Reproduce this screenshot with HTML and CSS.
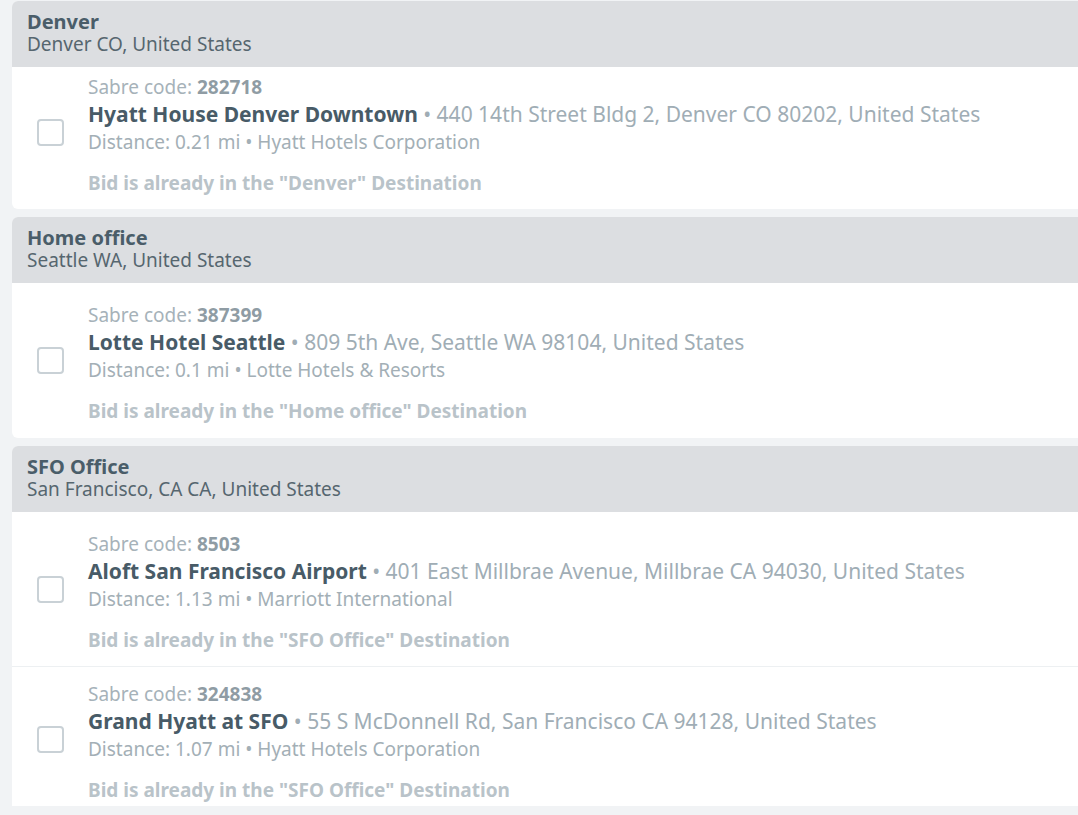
FILE: index.html
```html
<!DOCTYPE html>
<html>
<head>
<meta charset="utf-8">
<link rel="stylesheet" href="styles.css">
</head>
<body>
<div class="list">
  <section class="card">
    <header class="card-head">
      <div class="dest-name">Denver</div>
      <div class="dest-loc">Denver CO, United States</div>
    </header>
    <div class="row r1">
      <span class="checkbox"></span>
      <div class="info">
        <div class="code">Sabre code: <b>282718</b></div>
        <div class="hotel"><b>Hyatt House Denver Downtown</b> • 440 14th Street Bldg 2, Denver CO 80202, United States</div>
        <div class="meta">Distance: 0.21 mi • Hyatt Hotels Corporation</div>
        <div class="note">Bid is already in the "Denver" Destination</div>
      </div>
    </div>
  </section>
  <section class="card">
    <header class="card-head">
      <div class="dest-name">Home office</div>
      <div class="dest-loc">Seattle WA, United States</div>
    </header>
    <div class="row r2">
      <span class="checkbox"></span>
      <div class="info">
        <div class="code">Sabre code: <b>387399</b></div>
        <div class="hotel"><b>Lotte Hotel Seattle</b> • 809 5th Ave, Seattle WA 98104, United States</div>
        <div class="meta">Distance: 0.1 mi • Lotte Hotels &amp; Resorts</div>
        <div class="note">Bid is already in the "Home office" Destination</div>
      </div>
    </div>
  </section>
  <section class="card">
    <header class="card-head">
      <div class="dest-name">SFO Office</div>
      <div class="dest-loc">San Francisco, CA CA, United States</div>
    </header>
    <div class="row r3">
      <span class="checkbox"></span>
      <div class="info">
        <div class="code">Sabre code: <b>8503</b></div>
        <div class="hotel"><b>Aloft San Francisco Airport</b> • 401 East Millbrae Avenue, Millbrae CA 94030, United States</div>
        <div class="meta">Distance: 1.13 mi • Marriott International</div>
        <div class="note">Bid is already in the "SFO Office" Destination</div>
      </div>
    </div>
    <div class="row r4">
      <span class="checkbox"></span>
      <div class="info">
        <div class="code">Sabre code: <b>324838</b></div>
        <div class="hotel"><b>Grand Hyatt at SFO</b> • 55 S McDonnell Rd, San Francisco CA 94128, United States</div>
        <div class="meta">Distance: 1.07 mi • Hyatt Hotels Corporation</div>
        <div class="note">Bid is already in the "SFO Office" Destination</div>
      </div>
    </div>
  </section>
</div>
</body>
</html>
```
FILE: styles.css
```css
html, body {
  margin: 0;
  padding: 0;
  background: #f1f3f5;
  overflow: hidden;
  height: 815px;
}
body {
  font-family: "Noto Sans", "Open Sans", sans-serif;
  color: #4a5d69;
}
.list {
  height: 806px;
  overflow: hidden;
  padding: 1px 0 0 12px;
  box-sizing: border-box;
  display: flex;
  flex-direction: column;
  gap: 8px;
}
.card {
  flex: none;
  background: #ffffff;
  border-radius: 6px 0 0 6px;
  margin-right: -6px;
  overflow: hidden;
}
.card-head {
  background: #dcdee1;
  padding: 10px 15px 12px 15px;
}
.dest-name {
  font-size: 20px;
  font-weight: 700;
  line-height: 22px;
  color: #4a5d69;
}
.dest-loc {
  font-size: 19px;
  line-height: 22px;
  color: #56666f;
}
.row {
  display: flex;
  align-items: center;
  padding: 7px 25px 13px;
  gap: 24px;
}
.row + .row {
  border-top: 1px solid #edf0f2;
}
.checkbox {
  flex: none;
  width: 23px;
  height: 23px;
  border: 2px solid #c9d1d6;
  border-radius: 4px;
  margin-top: -6px;
}
.info {
  display: flex;
  flex-direction: column;
}
.code {
  font-size: 19px;
  line-height: 26px;
  color: #a6b2b9;
}
.code b {
  color: #8f9ca4;
}
.hotel {
  font-size: 21px;
  line-height: 29px;
  color: #a0adb5;
}
.hotel b {
  color: #485b67;
}
.meta {
  font-size: 19px;
  line-height: 26px;
  color: #a3afb6;
}
.note {
  font-size: 19px;
  font-weight: 700;
  line-height: 26px;
  margin-top: 15px;
  color: #b9c3c9;
}
.r2 { padding-top: 19px; padding-bottom: 14px; }
.r3 { padding-top: 19px; padding-bottom: 13px; }
.r4 { padding-top: 14px; padding-bottom: 14px; }
```
